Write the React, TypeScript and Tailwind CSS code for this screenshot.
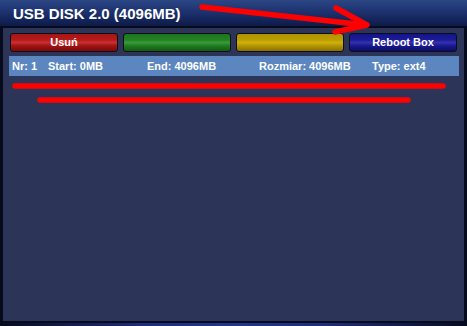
import React from "react";

const font = { fontFamily: '"Liberation Sans", Arial, sans-serif' };

function Btn({ cls, label }: { cls: string; label?: string }) {
  return (
    <div
      className={`w-[108px] h-[19px] rounded-[3px] border border-[#0b0d1c] flex items-center justify-center text-white font-bold text-[11px] leading-none ${cls}`}
    >
      {label}
    </div>
  );
}

export default function App() {
  return (
    <div className="relative w-[467px] h-[326px] bg-[#070b1e] overflow-hidden" style={font}>
      <div className="h-[26px] flex items-center pl-[13px] bg-[linear-gradient(to_bottom,#2c4684_0%,#1d3270_45%,#0e1a48_100%)]">
        <span className="text-white font-bold text-[15px] leading-none pt-[1px]">USB DISK 2.0 (4096MB)</span>
      </div>
      <div className="h-[2px] bg-[#070b1e]" />
      <div className="ml-[3px] mr-[3px] h-[293px] bg-[#2c3558] pt-[5px]">
        <div className="flex gap-[5px] pl-[7px]">
          <Btn cls="bg-[linear-gradient(to_bottom,#a81414_0%,#b41c1c_35%,#c83030_50%,#a01212_70%,#7c0a0a_100%)]" label="Usuń" />
          <Btn cls="bg-[linear-gradient(to_bottom,#1c761c_0%,#238223_35%,#3a9a3a_50%,#1f7a1f_70%,#135a13_100%)]" />
          <Btn cls="bg-[linear-gradient(to_bottom,#b09200_0%,#bc9e00_35%,#d0b010_50%,#b39500_70%,#8a7000_100%)]" />
          <Btn cls="bg-[linear-gradient(to_bottom,#14148a_0%,#1c1c96_35%,#3232b0_50%,#18188e_70%,#0c0c66_100%)]" label="Reboot Box" />
        </div>
        <div className="mt-[4px] ml-[6px] mr-[5px] h-[20px] bg-[#5b86bf] flex items-center text-white font-bold text-[11px] leading-none pl-[3px]">
          <span className="w-[36px]">Nr: 1</span>
          <span className="w-[99px]">Start: 0MB</span>
          <span className="w-[112px]">End: 4096MB</span>
          <span className="w-[113px]">Rozmiar: 4096MB</span>
          <span>Type: ext4</span>
        </div>
      </div>
      <div className="mt-[2px] h-[3px] bg-[linear-gradient(to_right,#070b1e_0%,#1e2c7a_30%,#24348a_50%,#1e2c7a_70%,#070b1e_100%)]" />
      <svg className="absolute inset-0 pointer-events-none" width="467" height="326" viewBox="0 0 467 326">
        <g stroke="#ff0000" strokeWidth="5.5" strokeLinecap="round" fill="none" strokeLinejoin="round">
          <line x1="202" y1="7" x2="366" y2="25" />
          <polyline points="336,8 367,25 335,32" />
          <line x1="15" y1="86" x2="443" y2="86" />
          <line x1="40" y1="100" x2="408" y2="100" />
        </g>
      </svg>
    </div>
  );
}
